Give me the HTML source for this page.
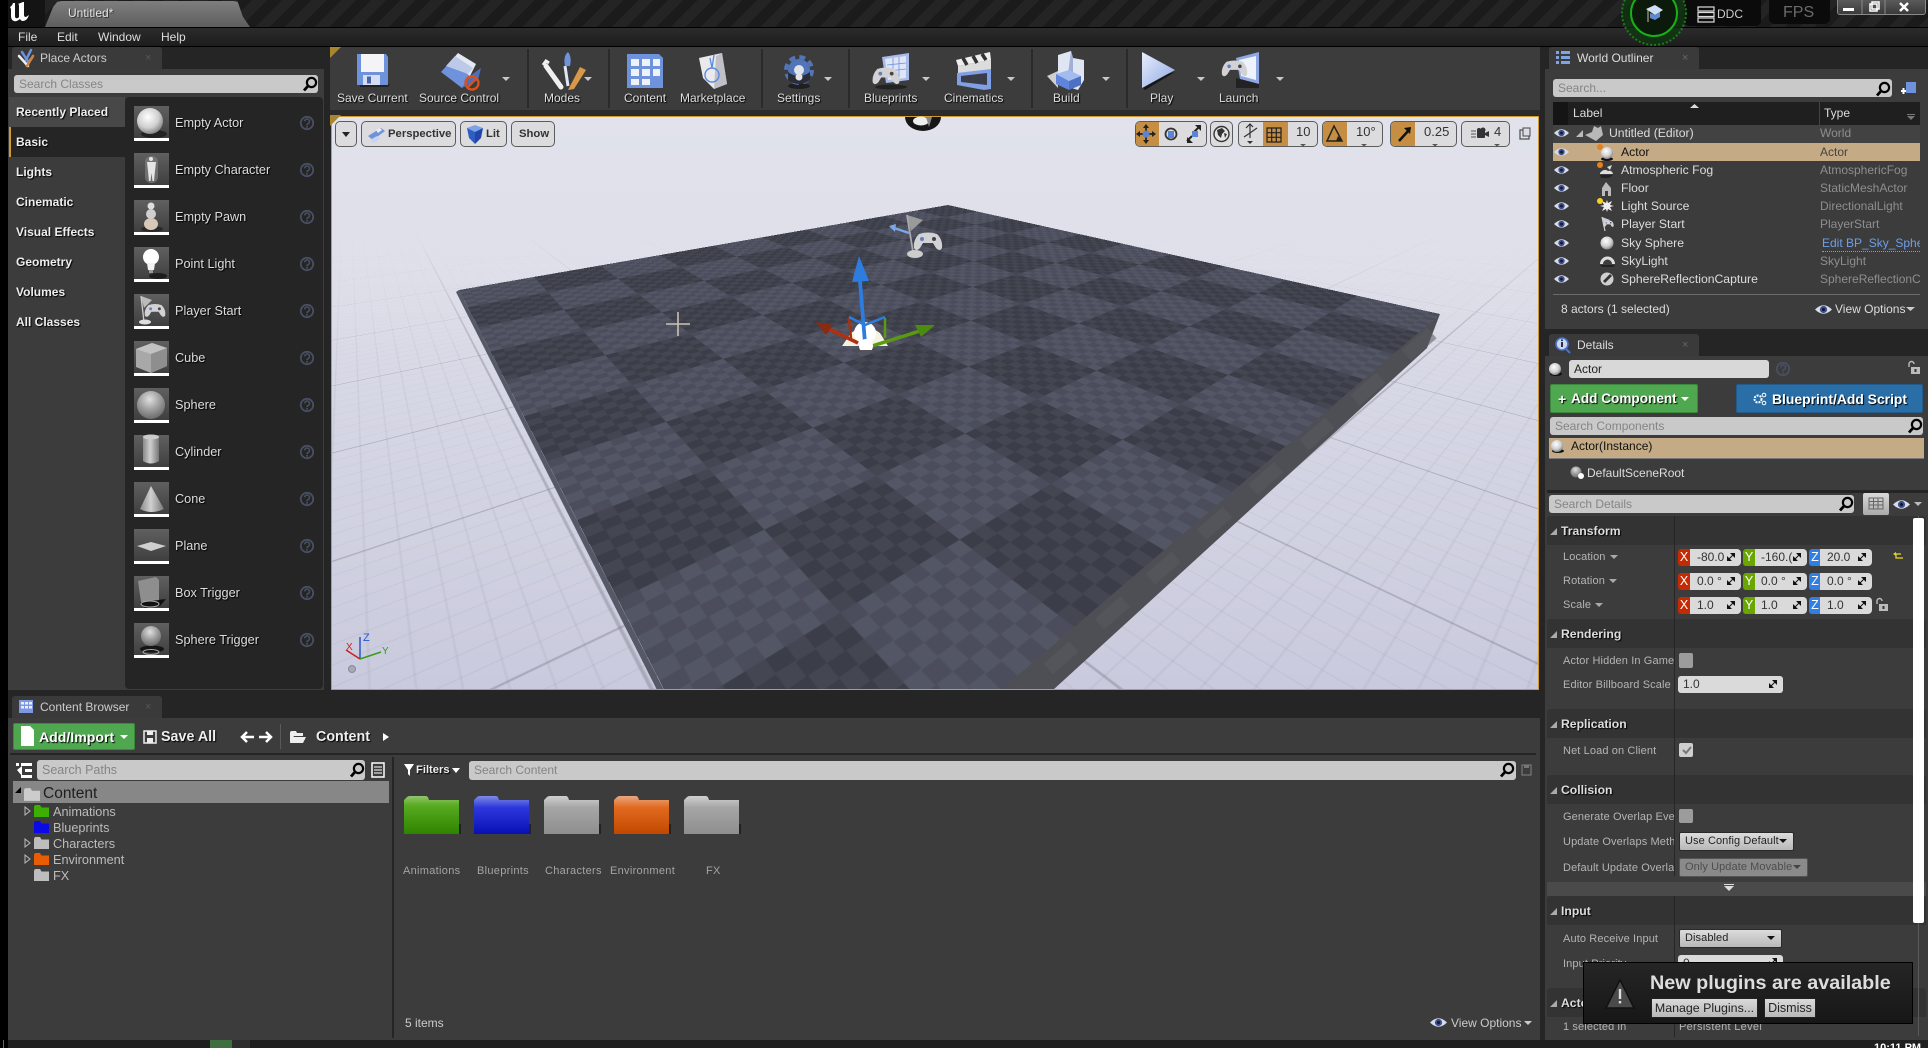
<!DOCTYPE html>
<html><head><meta charset="utf-8"><title>Untitled - Unreal Editor</title>
<style>
html,body{margin:0;padding:0;background:#252525}
body{position:relative;width:1928px;height:1048px;overflow:hidden;font-family:"Liberation Sans",sans-serif;font-size:12px;color:#ddd}
.a{position:absolute;box-sizing:border-box}
.t{position:absolute;white-space:nowrap;line-height:16px;height:16px;font-size:12px;color:#ddd}
.s{text-shadow:1px 1px 1px #000}
.b{font-weight:bold;color:#eee;text-shadow:1px 1px 1px #000}
.tab{position:absolute;box-sizing:border-box;background:#3a3a3a;border-radius:3px 3px 0 0}
.inp{position:absolute;box-sizing:border-box;background:#c9c9c9;border-radius:3px;color:#858585;line-height:18px;padding-left:5px;font-size:12px;white-space:nowrap}
.lab{position:absolute;left:1563px;width:111px;overflow:hidden;white-space:nowrap;line-height:16px;height:16px;font-size:11px;letter-spacing:.12px;color:#b4b4b4}
.sec{position:absolute;left:1547px;width:379px;height:29px;background:#333;border-radius:3px 3px 0 0}
.sect{position:absolute;left:1561px;line-height:16px;font-size:12.2px;font-weight:bold;color:#ddd;text-shadow:1px 1px 1px #000}
.f{position:absolute;box-sizing:border-box;height:17px;background:#dadada;border-radius:0 4px 4px 0;color:#333;font-size:12px;line-height:17px;white-space:nowrap;overflow:hidden}
.ax{position:absolute;width:12px;height:17px;color:#fff;font-size:12.5px;line-height:17px;text-align:center;border-radius:3px 0 0 3px}
.dd{position:absolute;box-sizing:border-box;height:19px;background:linear-gradient(#dcdcdc,#b8b8b8);border:1px solid #2a2a2a;border-radius:2px;color:#222;font-size:11px;letter-spacing:.08px;line-height:17px;padding-left:5px;white-space:nowrap}
.vb{position:absolute;box-sizing:border-box;top:121px;height:26px;background:#dcdcdf;border:1px solid #5c5c5c;border-radius:5px;color:#333;font-size:11.3px;font-weight:bold;line-height:24px;white-space:nowrap;overflow:hidden}
.or{position:absolute;left:0;top:0;bottom:0;background:#c68e42}
.vp{position:absolute;left:332px;top:117px;width:1206px;height:572px;overflow:hidden;background:linear-gradient(180deg,#e1e2eb 0,#dcdde8 30%,#d3d4e3 62%,#c9cadd 100%)}
.w{position:absolute;left:-332px;top:-117px;width:1928px;height:1048px}
.ground{position:absolute;left:0;top:28px;width:6000px;height:6000px;transform-origin:0 0;
transform:matrix3d(-.2545,-.0527,0,-.00073337,1.0855,.044,0,.00062918,0,0,1,0,459,290,0,1) translate(-3000px,-3000px);
background-image:linear-gradient(rgba(120,120,132,.36) 0 2px,transparent 2px),linear-gradient(90deg,rgba(120,120,132,.36) 0 2px,transparent 2px),linear-gradient(rgba(140,140,155,.15) 0 1.4px,transparent 1.4px),linear-gradient(90deg,rgba(140,140,155,.15) 0 1.4px,transparent 1.4px);
background-size:200px 200px,200px 200px,20px 20px,20px 20px}
.floor{position:absolute;left:0;top:0;width:1000px;height:1000px;transform-origin:0 0;
transform:matrix3d(-.2545,-.0527,0,-.00073337,1.0855,.044,0,.00062918,0,0,1,0,459,290,0,1);
background-image:repeating-conic-gradient(rgba(255,255,255,.04) 0 25%,rgba(0,0,0,.02) 0 50%),repeating-conic-gradient(#3c3e4a 0 25%,#4c4f5e 0 50%);
background-size:25px 25px,200px 200px}
</style></head><body>

<!-- title bar -->
<div class="a" style="left:0;top:0;width:1928px;height:27px;background:repeating-linear-gradient(135deg,#1b1b1b 0 10.5px,#242424 10.5px 21px)"></div>
<div class="a" style="left:0;top:0;width:8px;height:1048px;background:#000"></div>
<div class="a" style="left:8px;top:0;width:37px;height:27px;background:#141414"></div>
<div class="a" style="left:45px;top:1px;width:205px;height:26px;background:linear-gradient(#7e7e7e,#5e5e5e);clip-path:polygon(0 100%,4% 22%,6% 3%,8% 0,92% 0,94% 3%,96.5% 60%,100% 100%)"></div>
<div class="t" style="left:68px;top:5px;color:#e4e4e4;text-shadow:1px 1px 0 #333">Untitled*</div>
<!-- menu bar -->
<div class="a" style="left:8px;top:27px;width:1920px;height:20px;background:linear-gradient(#2b2b2b,#1d1d1d);border-top:1px solid #000;border-bottom:1px solid #000"></div>
<div class="t" style="left:18px;top:29px">File</div>
<div class="t" style="left:57px;top:29px">Edit</div>
<div class="t" style="left:98px;top:29px">Window</div>
<div class="t" style="left:161px;top:29px">Help</div>
<!-- DDC / FPS / window controls -->
<div class="a" style="left:1684px;top:0;width:77px;height:26px;background:#0b0b0b;border-radius:0 0 5px 5px"></div>
<div class="t" style="left:1717px;top:6px;color:#ccc;font-size:12px">DDC</div>
<div class="a" style="left:1769px;top:0;width:61px;height:24px;background:#0b0b0b;border-radius:0 0 6px 6px"></div>
<div class="t" style="left:1783px;top:5px;color:#6a6a6a;font-size:16px;line-height:16px">FPS</div>
<div class="a" style="left:1837px;top:0;width:89px;height:15px;background:linear-gradient(#5a5a5a,#3a3a3a);border:1px solid #8a8a8a;border-top:0;border-radius:0 0 3px 3px"></div>

<!-- Place actors -->
<div class="tab" style="left:12px;top:47px;width:150px;height:22px"></div>
<div class="t" style="left:40px;top:50px;color:#ccc">Place Actors</div>
<div class="t" style="left:145px;top:50px;color:#555;font-size:11px">×</div>
<div class="a" style="left:8px;top:69px;width:316px;height:621px;background:#3c3c3c"></div>
<div class="inp" style="left:14px;top:75px;width:304px;height:18px">Search Classes</div>
<div class="a" style="left:125px;top:97px;width:198px;height:592px;background:#252525;border-radius:4px"></div>
<div class="a" style="left:9px;top:97px;width:116px;height:30px;background:#484848"></div>
<div class="a" style="left:9px;top:127px;width:116px;height:30px;background:#252525;border-left:2px solid #d09a30"></div>
<div class="t b" style="left:16px;top:104px;font-size:12px">Recently Placed</div>
<div class="t b" style="left:16px;top:134px">Basic</div>
<div class="t b" style="left:16px;top:164px">Lights</div>
<div class="t b" style="left:16px;top:194px">Cinematic</div>
<div class="t b" style="left:16px;top:224px">Visual Effects</div>
<div class="t b" style="left:16px;top:254px">Geometry</div>
<div class="t b" style="left:16px;top:284px">Volumes</div>
<div class="t b" style="left:16px;top:314px">All Classes</div>
<div class="t s" style="left:175px;top:115px;font-size:12.7px">Empty Actor</div>
<div class="t s" style="left:175px;top:162px;font-size:12.7px">Empty Character</div>
<div class="t s" style="left:175px;top:209px;font-size:12.7px">Empty Pawn</div>
<div class="t s" style="left:175px;top:256px;font-size:12.7px">Point Light</div>
<div class="t s" style="left:175px;top:303px;font-size:12.7px">Player Start</div>
<div class="t s" style="left:175px;top:350px;font-size:12.7px">Cube</div>
<div class="t s" style="left:175px;top:397px;font-size:12.7px">Sphere</div>
<div class="t s" style="left:175px;top:444px;font-size:12.7px">Cylinder</div>
<div class="t s" style="left:175px;top:491px;font-size:12.7px">Cone</div>
<div class="t s" style="left:175px;top:538px;font-size:12.7px">Plane</div>
<div class="t s" style="left:175px;top:585px;font-size:12.7px">Box Trigger</div>
<div class="t s" style="left:175px;top:632px;font-size:12.7px">Sphere Trigger</div>

<!-- toolbar -->
<div class="a" style="left:330px;top:47px;width:1210px;height:63px;background:#3c3c3c"></div>
<div class="a" style="left:330px;top:110px;width:1210px;height:6px;background:#2b2b2b"></div>
<div class="t s" style="left:337px;top:90px">Save Current</div>
<div class="t s" style="left:419px;top:90px">Source Control</div>
<div class="t s" style="left:544px;top:90px">Modes</div>
<div class="t s" style="left:624px;top:90px">Content</div>
<div class="t s" style="left:680px;top:90px">Marketplace</div>
<div class="t s" style="left:777px;top:90px">Settings</div>
<div class="t s" style="left:864px;top:90px">Blueprints</div>
<div class="t s" style="left:944px;top:90px">Cinematics</div>
<div class="t s" style="left:1053px;top:90px">Build</div>
<div class="t s" style="left:1150px;top:90px">Play</div>
<div class="t s" style="left:1219px;top:90px">Launch</div>

<!-- viewport -->
<div class="a" style="left:331px;top:116px;width:1208px;height:574px;border:1px solid #d09a30"></div>
<div class="vp"><div class="w">
  <div class="ground"></div>
  <div class="a" style="left:332px;top:117px;width:1206px;height:240px;background:linear-gradient(#e1e2eb 0,#dfe0ea 45%,rgba(222,223,234,0) 100%)"></div>
  <svg class="a" style="left:0;top:0" width="1928" height="1048">
    <polygon points="1440,314 1427,348 1053,690 996,690" fill="#4e4f55"/>
    <line x1="1432" y1="333" x2="1022" y2="692" stroke="#5a5b61" stroke-width="14" stroke-dasharray="34 34" opacity=".55"/>
    <polygon points="459,290 664,690 657,690 456,292" fill="#555866"/>
  </svg>
  <div class="floor"></div>
</div></div>
<div class="vb" style="left:335px;width:22px"></div>
<div class="vb" style="left:361px;width:95px;padding-left:26px">Perspective</div>
<div class="vb" style="left:460px;width:47px;padding-left:25px">Lit</div>
<div class="vb" style="left:511px;width:44px;padding-left:7px">Show</div>
<div class="vb" style="left:1135px;width:72px"><div class="or" style="width:23px"></div></div>
<div class="vb" style="left:1210px;width:23px"></div>
<div class="vb" style="left:1238px;width:80px"><div class="or" style="left:24px;width:25px"></div><span style="position:absolute;left:57px;top:-2px;font-weight:normal;font-size:13px">10</span></div>
<div class="vb" style="left:1322px;width:61px"><div class="or" style="width:24px"></div><span style="position:absolute;left:33px;top:-2px;font-weight:normal;font-size:13px">10°</span></div>
<div class="vb" style="left:1390px;width:67px"><div class="or" style="width:24px"></div><span style="position:absolute;left:33px;top:-2px;font-weight:normal;font-size:13px">0.25</span></div>
<div class="vb" style="left:1461px;width:49px"><span style="position:absolute;left:32px;top:-2px;font-weight:normal;font-size:13px">4</span></div>

<!-- World Outliner -->
<div class="tab" style="left:1549px;top:47px;width:150px;height:22px"></div>
<div class="t" style="left:1577px;top:50px;color:#ddd">World Outliner</div>
<div class="t" style="left:1682px;top:50px;color:#666;font-size:11px">×</div>
<div class="a" style="left:1545px;top:69px;width:383px;height:260px;background:#3c3c3c"></div>
<div class="inp" style="left:1553px;top:79px;width:339px;height:18px">Search...</div>
<div class="a" style="left:1553px;top:102px;width:367px;height:23px;background:#1f1f1f"></div>
<div class="a" style="left:1553px;top:102px;width:15px;height:23px;background:#151515"></div>
<div class="a" style="left:1819px;top:102px;width:1px;height:23px;background:#444"></div>
<div class="t" style="left:1573px;top:105px">Label</div>
<div class="t" style="left:1824px;top:105px">Type</div>
<div class="a" style="left:1553px;top:125px;width:367px;height:18px;background:#424242"></div>
<div class="a" style="left:1553px;top:143px;width:367px;height:18px;background:#c4aa85"></div>
<div class="t" style="left:1609px;top:125px;font-size:12.2px">Untitled (Editor)</div>
<div class="t" style="left:1621px;top:144px;color:#111;font-size:12.2px">Actor</div>
<div class="t" style="left:1621px;top:162px;font-size:12.2px">Atmospheric Fog</div>
<div class="t" style="left:1621px;top:180px;font-size:12.2px">Floor</div>
<div class="t" style="left:1621px;top:198px;font-size:12.2px">Light Source</div>
<div class="t" style="left:1621px;top:216px;font-size:12.2px">Player Start</div>
<div class="t" style="left:1621px;top:235px;font-size:12.2px">Sky Sphere</div>
<div class="t" style="left:1621px;top:253px;font-size:12.2px">SkyLight</div>
<div class="t" style="left:1621px;top:271px;font-size:12.2px">SphereReflectionCapture</div>
<div class="t" style="left:1820px;top:125px;color:#8e8e8e">World</div>
<div class="t" style="left:1820px;top:144px;color:#444">Actor</div>
<div class="t" style="left:1820px;top:162px;color:#8e8e8e">AtmosphericFog</div>
<div class="t" style="left:1820px;top:180px;color:#8e8e8e">StaticMeshActor</div>
<div class="t" style="left:1820px;top:198px;color:#8e8e8e">DirectionalLight</div>
<div class="t" style="left:1820px;top:216px;color:#8e8e8e">PlayerStart</div>
<div class="t" style="left:1822px;top:235px;width:98px;overflow:hidden;color:#6f9ee8;border-bottom:1px dotted #6f9ee8">Edit BP_Sky_Sphere</div>
<div class="t" style="left:1820px;top:253px;color:#8e8e8e">SkyLight</div>
<div class="t" style="left:1820px;top:271px;width:100px;overflow:hidden;color:#8e8e8e">SphereReflectionCapture</div>
<div class="a" style="left:1553px;top:294px;width:367px;height:1px;background:#6a6a6a"></div>
<div class="t" style="left:1561px;top:301px;color:#ddd">8 actors (1 selected)</div>
<div class="t" style="left:1835px;top:301px;color:#ddd">View Options</div>

<!-- Details -->
<div class="tab" style="left:1549px;top:334px;width:150px;height:22px"></div>
<div class="t" style="left:1577px;top:337px;color:#ddd">Details</div>
<div class="t" style="left:1682px;top:337px;color:#666;font-size:11px">×</div>
<div class="a" style="left:1545px;top:356px;width:383px;height:684px;background:#3c3c3c"></div>
<div class="a" style="left:1569px;top:360px;width:200px;height:18px;background:#d8d8d8;border-radius:3px;color:#222;line-height:18px;padding-left:5px">Actor</div>
<div class="a" style="left:1550px;top:384px;width:148px;height:29px;background:#4fa84f;border:1px solid #3b8a3b;border-radius:2px"></div>
<div class="t b" style="left:1558px;top:391px;font-size:14px;color:#fff">+</div>
<div class="t b" style="left:1571px;top:391px;font-size:13.6px;color:#fff">Add Component</div>
<div class="a" style="left:1736px;top:384px;width:187px;height:29px;background:#2a6ea8;border:1px solid #225b8c;border-radius:2px"></div>
<div class="t b" style="left:1772px;top:391px;font-size:13.9px;color:#fff">Blueprint/Add Script</div>
<div class="inp" style="left:1550px;top:417px;width:373px;height:18px">Search Components</div>
<div class="a" style="left:1549px;top:438px;width:375px;height:20px;background:#c4aa85"></div>
<div class="t" style="left:1571px;top:438px;color:#111;font-size:12px">Actor(Instance)</div>
<div class="a" style="left:1549px;top:458px;width:375px;height:1px;background:#777"></div>
<div class="t" style="left:1587px;top:465px;color:#ddd">DefaultSceneRoot</div>
<div class="a" style="left:1547px;top:490px;width:381px;height:3px;background:#242424"></div>
<div class="inp" style="left:1549px;top:495px;width:305px;height:18px">Search Details</div>
<div class="a" style="left:1863px;top:493px;width:26px;height:22px;background:linear-gradient(#d8d8d8,#aaa);border-radius:2px"></div>

<div class="sec" style="top:516px"></div><div class="sect" style="top:523px">Transform</div>
<div class="sec" style="top:619px"></div><div class="sect" style="top:626px">Rendering</div>
<div class="sec" style="top:709px"></div><div class="sect" style="top:716px">Replication</div>
<div class="sec" style="top:775px"></div><div class="sect" style="top:782px">Collision</div>
<div class="a" style="left:1547px;top:882px;width:379px;height:14px;background:#4a4a4a"></div>
<div class="sec" style="top:896px"></div><div class="sect" style="top:903px">Input</div>
<div class="sec" style="top:988px"></div><div class="sect" style="top:995px">Actor</div>
<div class="a" style="left:1674px;top:516px;width:1px;height:360px;background:#262626"></div>
<div class="a" style="left:1674px;top:896px;width:1px;height:141px;background:#262626"></div>
<div class="a" style="left:1918px;top:516px;width:1px;height:520px;background:#5a5a5a"></div>

<div class="lab" style="top:549px">Location</div>
<div class="lab" style="top:573px">Rotation</div>
<div class="lab" style="top:597px">Scale</div>
<div class="ax" style="left:1678px;top:549px;background:#c42b04">X</div><div class="f" style="left:1690px;top:549px;width:51px;padding-left:7px">-80.0</div>
<div class="ax" style="left:1743px;top:549px;background:#6aa600">Y</div><div class="f" style="left:1755px;top:549px;width:52px;padding-left:6px">-160.(</div>
<div class="ax" style="left:1809px;top:549px;background:#2f7fe6">Z</div><div class="f" style="left:1820px;top:549px;width:52px;padding-left:7px">20.0</div>
<div class="ax" style="left:1678px;top:573px;background:#c42b04">X</div><div class="f" style="left:1690px;top:573px;width:51px;padding-left:7px">0.0 °</div>
<div class="ax" style="left:1743px;top:573px;background:#6aa600">Y</div><div class="f" style="left:1755px;top:573px;width:52px;padding-left:6px">0.0 °</div>
<div class="ax" style="left:1809px;top:573px;background:#2f7fe6">Z</div><div class="f" style="left:1820px;top:573px;width:52px;padding-left:7px">0.0 °</div>
<div class="ax" style="left:1678px;top:597px;background:#c42b04">X</div><div class="f" style="left:1690px;top:597px;width:51px;padding-left:7px">1.0</div>
<div class="ax" style="left:1743px;top:597px;background:#6aa600">Y</div><div class="f" style="left:1755px;top:597px;width:52px;padding-left:6px">1.0</div>
<div class="ax" style="left:1809px;top:597px;background:#2f7fe6">Z</div><div class="f" style="left:1820px;top:597px;width:52px;padding-left:7px">1.0</div>

<div class="lab" style="top:653px">Actor Hidden In Game</div>
<div class="a" style="left:1679px;top:653px;width:14px;height:15px;background:#9c9c9c;border-radius:2px"></div>
<div class="lab" style="top:677px">Editor Billboard Scale</div>
<div class="f" style="left:1678px;top:676px;width:105px;padding-left:5px;border-radius:3px">1.0</div>
<div class="lab" style="top:743px">Net Load on Client</div>
<div class="a" style="left:1679px;top:743px;width:14px;height:14px;background:#cfcfcf;border-radius:2px"></div>
<div class="lab" style="top:809px">Generate Overlap Events</div>
<div class="a" style="left:1679px;top:809px;width:14px;height:14px;background:#9c9c9c;border-radius:2px"></div>
<div class="lab" style="top:834px">Update Overlaps Method</div>
<div class="dd" style="left:1679px;top:832px;width:115px">Use Config Default</div>
<div class="lab" style="top:860px">Default Update Overlaps</div>
<div class="dd" style="left:1679px;top:858px;width:129px;background:#8a8a8a;color:#4e4e4e;border-color:#555">Only Update Movable</div>
<div class="lab" style="top:931px">Auto Receive Input</div>
<div class="dd" style="left:1679px;top:929px;width:103px">Disabled</div>
<div class="lab" style="top:956px">Input Priority</div>
<div class="f" style="left:1678px;top:955px;width:105px;padding-left:5px;border-radius:3px">0</div>
<div class="lab" style="top:1019px">1 selected in</div>
<div class="t" style="left:1679px;top:1019px;font-size:11px;letter-spacing:.3px;color:#b4b4b4">Persistent Level</div>
<div class="a" style="left:1913px;top:518px;width:11px;height:405px;background:#fff;border-radius:2px"></div>

<!-- Content browser -->
<div class="tab" style="left:12px;top:696px;width:150px;height:22px"></div>
<div class="t" style="left:40px;top:699px;color:#ccc">Content Browser</div>
<div class="t" style="left:145px;top:699px;color:#555;font-size:11px">×</div>
<div class="a" style="left:8px;top:718px;width:1532px;height:322px;background:#3c3c3c"></div>
<div class="a" style="left:13px;top:723px;width:122px;height:27px;background:#4fa84f;border:1px solid #3b8a3b;border-radius:2px"></div>
<div class="t b" style="left:39px;top:729px;font-size:14.1px;color:#fff">Add/Import</div>
<div class="t b" style="left:161px;top:729px;font-size:14.3px">Save All</div>
<div class="a" style="left:280px;top:724px;width:1px;height:25px;background:#5a5a5a"></div>
<div class="t b" style="left:316px;top:729px;font-size:14.3px">Content</div>
<div class="a" style="left:10px;top:753px;width:1526px;height:2px;background:#252525"></div>
<div class="a" style="left:392px;top:757px;width:2px;height:281px;background:#252525"></div>
<div class="inp" style="left:37px;top:760px;width:328px;height:20px;line-height:20px;font-size:12.5px">Search Paths</div>
<div class="a" style="left:13px;top:781px;width:376px;height:22px;background:#878787"></div>
<div class="t" style="left:43px;top:786px;font-size:15.5px;color:#1e1e1e">Content</div>
<div class="t" style="left:53px;top:804px;font-size:12.7px;color:#bcbcbc">Animations</div>
<div class="t" style="left:53px;top:820px;font-size:12.7px;color:#bcbcbc">Blueprints</div>
<div class="t" style="left:53px;top:836px;font-size:12.7px;color:#bcbcbc">Characters</div>
<div class="t" style="left:53px;top:852px;font-size:12.7px;color:#bcbcbc">Environment</div>
<div class="t" style="left:53px;top:868px;font-size:12.7px;color:#bcbcbc">FX</div>
<div class="t b" style="left:416px;top:762px;font-size:11.2px">Filters</div>
<div class="inp" style="left:469px;top:761px;width:1047px;height:19px;line-height:19px;font-size:12px">Search Content</div>
<div class="t" style="left:403px;top:863px;font-size:11px;letter-spacing:.3px;color:#a4a4a4">Animations</div>
<div class="t" style="left:477px;top:863px;font-size:11px;letter-spacing:.3px;color:#a4a4a4">Blueprints</div>
<div class="t" style="left:545px;top:863px;font-size:11px;letter-spacing:.3px;color:#a4a4a4">Characters</div>
<div class="t" style="left:610px;top:863px;font-size:11px;letter-spacing:.3px;color:#a4a4a4">Environment</div>
<div class="t" style="left:706px;top:863px;font-size:11px;letter-spacing:.3px;color:#a4a4a4">FX</div>
<div class="t" style="left:405px;top:1015px;color:#ccc">5 items</div>
<div class="t" style="left:1451px;top:1015px;color:#ccc">View Options</div>

<!-- status strip -->
<div class="a" style="left:8px;top:1040px;width:1920px;height:8px;background:#1f1f1f"></div>
<div class="a" style="left:210px;top:1040px;width:22px;height:8px;background:#3f6f3f"></div>
<div class="a" style="left:232px;top:1040px;width:18px;height:8px;background:#2d2d2d"></div>
<div class="a" style="left:3px;top:1040px;width:1px;height:8px;background:#666"></div>
<div class="t" style="left:1874px;top:1043px;color:#fff;font-weight:bold;font-size:11px;height:5px;overflow:hidden;line-height:11px">10:11 PM</div>

<!-- icon overlay -->
<svg class="a" style="left:0;top:0;pointer-events:none" width="1928" height="1048">
<defs>
 <radialGradient id="sph" cx=".42" cy=".35" r=".75"><stop offset="0" stop-color="#fff"/><stop offset=".55" stop-color="#cfcfcf"/><stop offset="1" stop-color="#6a6a6a"/></radialGradient>
 <radialGradient id="sph2" cx=".45" cy=".3" r=".8"><stop offset="0" stop-color="#e0e0e0"/><stop offset=".5" stop-color="#9a9a9a"/><stop offset="1" stop-color="#5c5c5c"/></radialGradient>
 <linearGradient id="thb" x1="0" y1="0" x2="0" y2="1"><stop offset="0" stop-color="#606060"/><stop offset="1" stop-color="#3f3f3f"/></linearGradient>
 <linearGradient id="cyl" x1="0" x2="1"><stop offset="0" stop-color="#8a8a8a"/><stop offset=".45" stop-color="#d0d0d0"/><stop offset="1" stop-color="#777"/></linearGradient>
 <linearGradient id="play" x1="0" y1="0" x2="1" y2="1"><stop offset="0" stop-color="#e8eefc"/><stop offset="1" stop-color="#8ea8e4"/></linearGradient>
 <linearGradient id="fg" x1="0" y1="0" x2="0" y2="1"><stop offset="0" stop-color="#92c46e"/><stop offset=".25" stop-color="#58ab20"/><stop offset="1" stop-color="#2f8400"/></linearGradient>
 <linearGradient id="fb" x1="0" y1="0" x2="0" y2="1"><stop offset="0" stop-color="#7f8be6"/><stop offset=".3" stop-color="#2d38dc"/><stop offset="1" stop-color="#0810b4"/></linearGradient>
 <linearGradient id="fw" x1="0" y1="0" x2="0" y2="1"><stop offset="0" stop-color="#d0d0d0"/><stop offset=".3" stop-color="#a6a6a6"/><stop offset="1" stop-color="#8e8e8e"/></linearGradient>
 <linearGradient id="fo" x1="0" y1="0" x2="0" y2="1"><stop offset="0" stop-color="#e8a880"/><stop offset=".3" stop-color="#e26a20"/><stop offset="1" stop-color="#c24800"/></linearGradient>
 <symbol id="eye" viewBox="0 0 16 10" overflow="visible"><path d="M0 5Q8 -3 16 5Q8 13 0 5Z" fill="#d8dce8"/><circle cx="8" cy="5" r="3.4" fill="#3d4f8c"/><circle cx="8" cy="5" r="1.4" fill="#101628"/></symbol>
 <symbol id="help" viewBox="-8 -8 16 16" overflow="visible"><circle r="6.2" fill="none" stroke="#474f61" stroke-width="1.8"/><path d="M-2.3 -1.6a2.4 2.4 0 1 1 3.4 2.2c-.8.4-1.1.8-1.1 1.6" fill="none" stroke="#474f61" stroke-width="1.6"/><rect x="-.9" y="3" width="1.8" height="1.6" fill="#474f61"/></symbol>
 <symbol id="mag" viewBox="0 0 16 16" overflow="visible"><circle cx="9.5" cy="6.5" r="4.6" fill="none" stroke="#000" stroke-width="2.2"/><line x1="6" y1="10" x2="2" y2="14.5" stroke="#000" stroke-width="2.8"/></symbol>
 <symbol id="farr" viewBox="0 0 8 8" overflow="visible"><polygon points="8,0 3,0 8,5" fill="#111"/><polygon points="0,8 5,8 0,3" fill="#111"/><line x1="2" y1="6" x2="6" y2="2" stroke="#111"/></symbol>
 <symbol id="fold" viewBox="0 0 15 12" overflow="visible"><path d="M0 2.5Q0 0 2 0H6L7.5 2.5H15V12H0Z"/></symbol>
 <symbol id="lock" viewBox="0 0 13 13" overflow="visible"><path d="M1 6V3a2.5 2.5 0 0 1 5 0" fill="none" stroke="#bbb" stroke-width="1.4"/><rect x="3" y="6" width="9" height="7" fill="#bbb"/><rect x="6.5" y="8" width="2" height="3" fill="#333"/></symbol>
 <symbol id="ctrl" viewBox="0 0 30 20" overflow="visible"><path d="M6 2Q15 -1 24 2Q30 8 29 16Q27 20 23 16L20 11H10L7 16Q3 20 1 16Q0 8 6 2Z" fill="#d2d2d4"/><circle cx="9" cy="7" r="2" fill="#5e7fc2"/><circle cx="21" cy="7" r="2" fill="#444"/></symbol>
</defs>

<!-- UE logo -->
<path d="M10 7Q12 6 13 3H15V16Q15 19 18 18L19 17V6Q19 4 18 4L23 2H24V15Q24 17 26 17L29 15Q27 21 23 21Q21 21 20 19Q16 22 14 21Q11 20 11 16V9Z" fill="#fff"/>

<!-- tab icons -->
<g stroke-linecap="round" fill="none">
 <path d="M22 52L27 60M31 50L26 60M32 58L26 64" stroke="#6c93dc" stroke-width="2.5"/><path d="M19 56L28 66" stroke="#eee" stroke-width="2.5"/><path d="M33 56L27 66" stroke="#d0843c" stroke-width="2.5"/>
</g>
<g fill="#7fa4e6"><rect x="1556" y="51" width="3" height="3"/><rect x="1561" y="51" width="9" height="3"/><rect x="1556" y="56" width="3" height="3"/><rect x="1561" y="56" width="9" height="3"/><rect x="1556" y="61" width="3" height="3"/><rect x="1561" y="61" width="9" height="3"/></g>
<g><circle cx="1562" cy="344" r="6" fill="#ccd6f0" stroke="#4a72c8" stroke-width="1.6"/><line x1="1566" y1="349" x2="1570" y2="353" stroke="#4a72c8" stroke-width="2"/><rect x="1561" y="342" width="2" height="5" fill="#234"/><rect x="1561" y="339.500" width="2" height="1.500" fill="#234"/></g>
<g><rect x="19" y="700" width="14" height="13" fill="#7d97e0"/><g fill="#e8eefc"><rect x="21" y="702" width="3" height="2.500"/><rect x="25" y="702" width="3" height="2.500"/><rect x="29" y="702" width="3" height="2.500"/><rect x="21" y="706" width="3" height="2.500"/><rect x="25" y="706" width="3" height="2.500"/><rect x="29" y="706" width="3" height="2.500"/></g></g>

<!-- place-actors search -->
<use href="#mag" x="302" y="76" width="16" height="16"/>

<!-- thumbnails -->
<g id="thumbs">
 <g fill="url(#thb)"><rect x="134" y="106" width="35" height="32"/><rect x="134" y="153" width="35" height="32"/><rect x="134" y="200" width="35" height="32"/><rect x="134" y="247" width="35" height="32"/><rect x="134" y="294" width="35" height="32"/><rect x="134" y="341" width="35" height="32"/><rect x="134" y="388" width="35" height="32"/><rect x="134" y="435" width="35" height="32"/><rect x="134" y="482" width="35" height="32"/><rect x="134" y="529" width="35" height="32"/><rect x="134" y="576" width="35" height="32"/><rect x="134" y="623" width="35" height="32"/></g>
 <g fill="#fff"><rect x="134" y="138" width="35" height="3"/><rect x="134" y="185" width="35" height="3"/><rect x="134" y="232" width="35" height="3"/><rect x="134" y="279" width="35" height="3"/><rect x="134" y="326" width="35" height="3"/><rect x="134" y="373" width="35" height="3"/><rect x="134" y="420" width="35" height="3"/><rect x="134" y="467" width="35" height="3"/><rect x="134" y="514" width="35" height="3"/><rect x="134" y="561" width="35" height="3"/><rect x="134" y="608" width="35" height="3"/><rect x="134" y="655" width="35" height="3"/></g>
 <ellipse cx="154" cy="134" rx="13" ry="4" fill="#222"/><circle cx="150" cy="121" r="13" fill="url(#sph)"/>
 <rect x="145" y="156" width="13" height="27" rx="6" fill="#888" opacity=".6"/><path d="M151 157a2 2 0 0 1 0 4 2 2 0 0 1 0-4M147 162h9l-1 9-1 10h-1.500l-1-8-1 8H149l-1-10z" fill="#e6e6e6"/>
 <ellipse cx="152" cy="229" rx="11" ry="3" fill="#2a2a2a"/><circle cx="151" cy="206" r="3.500" fill="#ddd"/><circle cx="151" cy="214" r="5" fill="#cfcfcf"/><ellipse cx="151" cy="224" rx="7" ry="6" fill="#d8c8b8"/>
 <ellipse cx="158" cy="276" rx="9" ry="3" fill="#1d1d1d"/><circle cx="151" cy="257" r="8" fill="#fff"/><path d="M147 263h8l-1 7h-6z" fill="#f2f2f2"/><rect x="149" y="270" width="4" height="3" fill="#999"/>
 <polygon points="141,296 152,300 144,308" fill="#bbb"/><line x1="141" y1="296" x2="144" y2="322" stroke="#ccc" stroke-width="1.300"/><use href="#ctrl" x="144" y="303" width="22" height="16"/><ellipse cx="145" cy="322" rx="6" ry="2.500" fill="#ddd"/>
 <polygon points="136,349 152,343 167,348 167,366 151,373 136,367" fill="#a8a8a8"/><polygon points="136,349 152,343 167,348 151,354" fill="#c2c2c2"/><polygon points="151,354 167,348 167,366 151,373" fill="#8e8e8e"/>
 <circle cx="151" cy="405" r="14" fill="url(#sph2)"/>
 <path d="M143 437v24q8 5 16 0v-24z" fill="url(#cyl)"/><ellipse cx="151" cy="437" rx="8" ry="2.500" fill="#ccc"/>
 <path d="M151 486L164 509Q151 515 140 509Z" fill="url(#cyl)"/>
 <polygon points="137,546 151,542 166,546 151,551" fill="#cfcfcf"/>
 <polygon points="140,602 166,599 160,606 145,608" fill="#111"/><polygon points="138,581 156,577 159,580 159,600 141,602" fill="#8e8e8e"/><ellipse cx="150" cy="604" rx="9" ry="3" fill="none" stroke="#aaa"/>
 <ellipse cx="152" cy="649" rx="12" ry="3.500" fill="#151515"/><circle cx="151" cy="636" r="10" fill="url(#sph2)"/><ellipse cx="151" cy="652" rx="8" ry="2.500" fill="none" stroke="#aaa"/>
</g>
<g>
 <use href="#help" x="299" y="115" width="16" height="16"/><use href="#help" x="299" y="162" width="16" height="16"/><use href="#help" x="299" y="209" width="16" height="16"/><use href="#help" x="299" y="256" width="16" height="16"/><use href="#help" x="299" y="303" width="16" height="16"/><use href="#help" x="299" y="350" width="16" height="16"/><use href="#help" x="299" y="397" width="16" height="16"/><use href="#help" x="299" y="444" width="16" height="16"/><use href="#help" x="299" y="491" width="16" height="16"/><use href="#help" x="299" y="538" width="16" height="16"/><use href="#help" x="299" y="585" width="16" height="16"/><use href="#help" x="299" y="632" width="16" height="16"/>
</g>

<!-- toolbar & viewport corner marks -->
<polygon points="330,47 341,47 330,58" fill="#a8852e"/><polygon points="330,115 341,115 330,126" fill="#a8852e"/>
<g fill="#2a2a2a"><rect x="527" y="49" width="2" height="59"/><rect x="608" y="49" width="2" height="59"/><rect x="761" y="49" width="2" height="59"/><rect x="848" y="49" width="2" height="59"/><rect x="1031" y="49" width="2" height="59"/><rect x="1126" y="49" width="2" height="59"/></g>
<g fill="#c8c8c8"><polygon points="502,77 510,77 506,81"/><polygon points="584,77 592,77 588,81"/><polygon points="824,77 832,77 828,81"/><polygon points="922,77 930,77 926,81"/><polygon points="1007,77 1015,77 1011,81"/><polygon points="1102,77 1110,77 1106,81"/><polygon points="1197,77 1205,77 1201,81"/><polygon points="1276,77 1284,77 1280,81"/></g>

<!-- Save -->
<path d="M360 84h30l-2 3h-28z" fill="#222"/><path d="M357 54h29l2 3v28h-31z" fill="#6f92dc"/><rect x="361" y="54" width="23" height="18" fill="#f4f4f6"/><rect x="363" y="75" width="17" height="10" fill="#d6def2"/><rect x="367" y="76.500" width="4" height="7" fill="#4a66a8"/>
<!-- Source control -->
<polygon points="441,72 450,62 470,76 462,88" fill="#6f92dc"/><polygon points="462,88 470,76 481,68 478,80" fill="#4e70ba"/><polygon points="450,62 458,53 476,64 470,76" fill="#e6e9f2"/><polygon points="446,66 455,56 473,68 468,74" fill="#bcc9e8"/>
<circle cx="472" cy="83" r="6.500" fill="none" stroke="#d8501c" stroke-width="2.400"/><line x1="467.500" y1="87.500" x2="476.500" y2="78.500" stroke="#d8501c" stroke-width="2.400"/>
<!-- Modes -->
<path d="M546 66L561 87" stroke="#f0f0f0" stroke-width="5" stroke-linecap="round"/><path d="M543 65l3-4 3 2" fill="none" stroke="#f0f0f0" stroke-width="3"/><path d="M568 86L565 66" stroke="#dfe6f8" stroke-width="3"/><path d="M565 66Q563 56 568 52Q572 57 570 66z" fill="#6f92dc"/><path d="M580 67L586 70 574 89 568 90Z" fill="#d89848"/>
<!-- Content -->
<path d="M627 54h32l4 4v30h-36z" fill="#6f92dc"/><g fill="#eef2fb"><rect x="631" y="59" width="8" height="7"/><rect x="642" y="59" width="8" height="7"/><rect x="653" y="59" width="7" height="7"/><rect x="631" y="69" width="8" height="7"/><rect x="642" y="69" width="8" height="7"/><rect x="653" y="69" width="7" height="7"/><rect x="631" y="79" width="8" height="6"/><rect x="642" y="79" width="8" height="6"/></g>
<!-- Marketplace -->
<polygon points="699,58 722,53 727,84 714,89 703,78" fill="#e9e9ee"/><polygon points="722,53 727,84 714,89 716,56" fill="#bfc1c7"/><circle cx="712" cy="75" r="7" fill="none" stroke="#5c8ae0" stroke-width="1.400"/><path d="M710 58l2 10 2-13" fill="none" stroke="#5c8ae0" stroke-width="1.300"/>
<!-- Settings -->
<ellipse cx="799" cy="86" rx="11" ry="3" fill="#1f1f1f"/><circle cx="799" cy="70" r="11" fill="#5274b8"/><circle cx="799" cy="70" r="13" fill="none" stroke="#5274b8" stroke-width="4" stroke-dasharray="6 4.200"/><circle cx="799" cy="70" r="5" fill="#dfe3ea"/><path d="M788 72q11 8 22 0v8q-11 8-22 0z" fill="#2a2d38"/><circle cx="799" cy="77" r="3.500" fill="#e4e4e4"/>
<!-- Blueprints -->
<polygon points="882,57 909,53 909,80 886,83" fill="#a9bbe8"/><polygon points="885,59 906,56 906,78 888,80" fill="#dfe6f8"/><path d="M893 58v20M899 57v20M887 65l19-2M888 71l18-2" stroke="#6f92dc" stroke-width=".8" fill="none"/><ellipse cx="891" cy="87" rx="16" ry="2.500" fill="#222"/><use href="#ctrl" x="871" y="67" width="30" height="19"/>
<!-- Cinematics -->
<polygon points="958,66 991,60 991,70 958,74" fill="#dcdcdc"/><polygon points="956,60 990,52 991,60 958,66" fill="#eee"/><path d="M963 58l4 7M973 56l4 7M982 54l4 6" stroke="#333" stroke-width="3.500"/><polygon points="957,73 991,69 991,89 984,90 957,85" fill="#7fa0e4"/><polygon points="961,76 987,73 987,85 961,82" fill="#3a3d48"/>
<!-- Build -->
<polygon points="1058,55 1071,51 1073,58 1084,60 1084,80 1078,90 1058,84" fill="#dfe6f2"/><polygon points="1071,51 1073,58 1073,72 1068,74" fill="#9fb0d6"/><polygon points="1047,76 1058,71 1058,88" fill="#cfcfcf"/><polygon points="1056,74 1069,70 1081,76 1069,81" fill="#a3bcf0"/><polygon points="1056,74 1069,81 1069,90 1056,84" fill="#5f85da"/><polygon points="1069,81 1081,76 1081,85 1069,90" fill="#4e70c4"/>
<!-- Play -->
<polygon points="1143,88 1163,75 1175,72 1145,90" fill="#161616"/><polygon points="1142,52 1175,70 1142,88" fill="url(#play)"/>
<!-- Launch -->
<polygon points="1236,58 1259,52 1259,84 1240,79" fill="#8ea8e4"/><polygon points="1239,60 1256,56 1256,80 1241,76" fill="#eef2fb"/><polygon points="1236,78 1259,84 1259,88 1236,88" fill="#222"/><use href="#ctrl" x="1220" y="60" width="29" height="18"/>

<!-- viewport toolbar icons -->
<polygon points="342,132 350,132 346,137" fill="#222"/>
<g transform="translate(368,128)"><polygon points="0,8 13,0 17,3 5,12" fill="#6f92dc"/><polygon points="2,12 9,8 12,11 5,15" fill="#c6d4f2"/><polygon points="8,2 12,0 14,2 10,5" fill="#e6ecfa"/></g>
<g transform="translate(467,125)"><polygon points="0,3 8,0 16,3 8,7" fill="#7ea2ea"/><polygon points="0,3 8,7 8,19 2,13" fill="#2f5dc0"/><polygon points="16,3 8,7 8,19 14,13" fill="#1f46a8"/></g>
<g stroke="#222" stroke-width="1.700" fill="none"><path d="M1146 127v14M1139 134h14"/></g><circle cx="1146" cy="134" r="3.500" fill="#5b83d6"/><g fill="#222"><polygon points="1146,124 1143,128 1149,128"/><polygon points="1146,144 1143,140 1149,140"/><polygon points="1136,134 1140,131 1140,137"/><polygon points="1156,134 1152,131 1152,137"/></g>
<circle cx="1171" cy="134" r="5.500" fill="none" stroke="#333" stroke-width="1.800"/><rect x="1168" y="131" width="6" height="7" fill="#5b83d6"/>
<path d="M1187 141l5-5M1194 132l6-6" stroke="#222" stroke-width="2"/><rect x="1192" y="131" width="6" height="6" fill="#5b83d6"/><polygon points="1201,125 1195,125 1201,131" fill="#222"/><polygon points="1187,143 1193,143 1187,137" fill="#222"/>
<circle cx="1221.500" cy="134" r="7.500" fill="#e4e4e4" stroke="#333" stroke-width="1.400"/><path d="M1217 130l5-2 3 3-3 3-1 4-3-3zM1224 133l3 1-2 4z" fill="#333"/>
<path d="M1250 124v14M1250 133l-6 4M1250 133l7-5M1246 128l4-4 3 3" fill="none" stroke="#333" stroke-width="1.200"/><polygon points="1247,141 1253,141 1250,144" fill="#333"/>
<path d="M1267 128h14v14h-14zM1267 132.700h14M1267 137.300h14M1271.700 128v14M1276.300 128v14" fill="none" stroke="#222" stroke-width="1.200"/>
<path d="M1334 126l-7 15h15z" fill="none" stroke="#222" stroke-width="1.500"/><polygon points="1338,136 1342,141 1336,141" fill="#222"/>
<path d="M1399 141l10-11" stroke="#111" stroke-width="2.500"/><polygon points="1411,127 1404,128 1410,134" fill="#111"/>
<g transform="translate(1471,127)"><rect x="6" y="3" width="8" height="8" rx="1" fill="#333"/><circle cx="12" cy="3" r="2.500" fill="#333"/><circle cx="8" cy="3" r="2" fill="#333"/><path d="M0 4h5M0 7h5M0 10h5" stroke="#555" stroke-width="1"/><polygon points="14,6 18,4 18,10 14,8" fill="#333"/></g>
<g fill="#333"><polygon points="1361,144 1367,144 1364,146.500" opacity=".8"/><polygon points="1432,144 1438,144 1435,146.500" opacity=".8"/><polygon points="1494,144 1500,144 1497,146.500" opacity=".8"/><polygon points="1300,144 1306,144 1303,146.500" opacity=".8"/></g>
<rect x="1520" y="130" width="9" height="9" fill="none" stroke="#555" stroke-width="1.300"/><rect x="1523" y="128" width="7" height="8" fill="#dcdce6" stroke="#555" stroke-width="1.100"/>

<!-- viewport objects -->
<path d="M905 117A18 14 0 0 0 941 117Z" fill="#161616"/><ellipse cx="921" cy="121" rx="8" ry="4.500" fill="#eee"/><path d="M926 117h6l-3 10z" fill="#888"/>
<line x1="678" y1="312" x2="678" y2="336" stroke="#cbc3b6" stroke-width="1.600"/><line x1="666" y1="324" x2="690" y2="324" stroke="#cbc3b6" stroke-width="1.600"/>
<!-- player start -->
<path d="M891 227L909 233" stroke="#7ba6e8" stroke-width="2.500"/><polygon points="889,226 896,224 895,232" fill="#7ba6e8"/>
<use href="#ctrl" x="913" y="231" width="30" height="22"/>
<polygon points="907,215 923,220 911,231" fill="#9a9a9a"/><line x1="907" y1="215" x2="913" y2="252" stroke="#aaa" stroke-width="1.800"/><ellipse cx="915" cy="254" rx="8" ry="4" fill="#ccc"/>
<!-- gizmo -->
<path d="M842 346L851 333Q865 322 880 333L888 346Z" fill="#f6f2e2"/><circle cx="865" cy="333" r="11" fill="#fff"/>
<path d="M849 318L851 338" stroke="#a83010" stroke-width="2.500" fill="none"/><path d="M885 318L885 338" stroke="#5a9a10" stroke-width="2.500" fill="none"/>
<path d="M849 317L865 325L885 317" stroke="#2d7ce0" stroke-width="2.500" fill="none"/>
<path d="M858 343L825 327" stroke="#b03010" stroke-width="3.500"/><polygon points="816,322 833,325 826,335" fill="#8a2a10"/>
<path d="M872 346L920 331" stroke="#5a9a10" stroke-width="3.500"/><polygon points="935,325 915,325 921,337" fill="#4c8a10"/>
<path d="M865 343L859.500 275" stroke="#2d7ce0" stroke-width="3.800"/><polygon points="859,256 869,281 852,282" fill="#2d7ce0"/>
<circle cx="866" cy="346" r="7" fill="#fff"/><path d="M860 350l12 0-3 4h-6z" fill="#555"/>
<!-- axis -->
<g fill="none" stroke-width="1.500"><path d="M360 659V637" stroke="#2a55d0"/><path d="M360 659L346 650" stroke="#c82020"/><path d="M360 659L381 652" stroke="#3a9a20"/></g>
<circle cx="352" cy="669" r="3.500" fill="#a8a8b4" stroke="#8a8a98"/>
<text x="363" y="641" font-size="11" fill="#2a55d0" font-family="Liberation Sans,sans-serif">Z</text>
<text x="346" y="650" font-size="10" fill="#c82020" font-family="Liberation Sans,sans-serif">X</text>
<text x="382" y="654" font-size="10" fill="#3a9a20" font-family="Liberation Sans,sans-serif">Y</text>

<!-- green beacon -->
<circle cx="1654" cy="13" r="32" fill="#0b3a0b" opacity=".65"/><circle cx="1654" cy="13" r="32" fill="none" stroke="#1f7a1f" stroke-width="2" stroke-dasharray="2 2"/><circle cx="1654" cy="13" r="23" fill="#0c1a0c" stroke="#18b018" stroke-width="2"/>
<polygon points="1646,9 1655,5 1663,10 1655,15" fill="#cfe0f5"/><polygon points="1650,13 1655,15 1660,12 1660,17 1655,20 1650,18" fill="#5f8ad0"/><line x1="1648" y1="10" x2="1648" y2="22" stroke="#d8c090"/>
<rect x="1698" y="7" width="16" height="4" fill="none" stroke="#ddd" stroke-width="1.200"/><rect x="1698" y="12.500" width="16" height="4" fill="none" stroke="#ddd" stroke-width="1.200"/><rect x="1698" y="18" width="16" height="4" fill="none" stroke="#ddd" stroke-width="1.200"/>
<!-- window controls -->
<g fill="none" stroke="#000"><line x1="1862" y1="0" x2="1862" y2="15" stroke="#8a8a8a"/><line x1="1885" y1="0" x2="1885" y2="15" stroke="#8a8a8a"/></g>
<rect x="1843" y="8" width="11" height="3" fill="#fff"/>
<rect x="1870" y="4" width="7" height="7" fill="none" stroke="#fff" stroke-width="1.500"/><rect x="1872" y="2" width="7" height="7" fill="none" stroke="#fff" stroke-width="1.500"/>
<path d="M1900 3l8 8M1908 3l-8 8" stroke="#fff" stroke-width="2.500"/>

<!-- outliner -->
<use href="#mag" x="1875" y="81" width="16" height="16"/>
<rect x="1906" y="82" width="10" height="11" fill="#6f92dc"/><path d="M1905 89h-5M1902.500 86v6" stroke="#fff" stroke-width="2" transform="translate(1,2)"/>
<polygon points="1690,108 1699,108 1694.500,104" fill="#ddd"/><polygon points="1907,116 1915,116 1911,120" fill="#777"/><rect x="1907" y="114" width="8" height="1" fill="#777"/>
<g><use href="#eye" x="1554" y="128" width="15" height="10"/><use href="#eye" x="1554" y="147" width="15" height="10"/><use href="#eye" x="1554" y="165" width="15" height="10"/><use href="#eye" x="1554" y="183" width="15" height="10"/><use href="#eye" x="1554" y="201" width="15" height="10"/><use href="#eye" x="1554" y="219" width="15" height="10"/><use href="#eye" x="1554" y="238" width="15" height="10"/><use href="#eye" x="1554" y="256" width="15" height="10"/><use href="#eye" x="1554" y="274" width="15" height="10"/></g>
<polygon points="1576,137 1583,137 1583,130" fill="#bbb"/>
<polygon points="1585,135 1592,132 1594,126 1598,128 1601,126 1603,135 1596,141" fill="#b8b8b8"/>
<ellipse cx="1607" cy="159" rx="6" ry="2" fill="#111"/><circle cx="1607" cy="153" r="6" fill="url(#sph)"/><circle cx="1600" cy="147" r="3" fill="#e8801c"/>
<path d="M1600 173q4-5 8-2q4-1 5 3h-13z" fill="#ddd"/><path d="M1600 175h13l-4 3h-8z" fill="#222"/><polygon points="1607,167 1612,165 1610,170" fill="#ddd"/><circle cx="1600" cy="165" r="3" fill="#e8801c"/>
<path d="M1602 188l4-6 5 6v8h-3v-5h-3v5h-3z" fill="#bbb"/>
<path d="M1607 200l1 3 4-2-2 4 4 1-4 1 2 4-4-2-1 3-1-3-4 2 2-4-4-1 4-1-2-4 4 2z" fill="#eee"/><circle cx="1600" cy="201" r="3" fill="#f2d21c"/>
<polygon points="1602,217 1610,220 1604,224" fill="#ccc"/><line x1="1602" y1="217" x2="1605" y2="231" stroke="#ccc" stroke-width="1.200"/><use href="#ctrl" x="1603" y="220" width="11" height="8" />
<circle cx="1607" cy="243" r="6.500" fill="url(#sph)"/>
<path d="M1600 264a7.500 7.500 0 0 1 15 0h-3a4.500 4.500 0 0 0-9 0z" fill="#ddd"/><path d="M1600 265h15l-2 2h-11z" fill="#222"/>
<circle cx="1607" cy="279" r="6.500" fill="#cfcfcf"/><path d="M1603 281l7-7 2 2-7 7z" fill="#333"/>
<use href="#eye" x="1815" y="304" width="17" height="11"/>
<polygon points="1906,307 1915,307 1910.500,311" fill="#ccc"/>

<!-- details -->
<ellipse cx="1556" cy="374" rx="6" ry="2" fill="#111"/><circle cx="1555" cy="369" r="6" fill="url(#sph)"/>
<use href="#help" x="1775" y="361" width="16" height="16"/><use href="#lock" x="1908" y="361" width="13" height="13"/>
<polygon points="1681,397 1689,397 1685,401" fill="#fff"/>
<circle cx="1758" cy="399" r="3.500" fill="none" stroke="#fff" stroke-width="2" stroke-dasharray="2 1"/><circle cx="1764" cy="395" r="1.800" fill="none" stroke="#fff"/><circle cx="1764" cy="403" r="1.800" fill="none" stroke="#fff"/>
<use href="#mag" x="1907" y="418" width="16" height="16"/>
<ellipse cx="1558" cy="451" rx="6" ry="2" fill="#111"/><circle cx="1557" cy="446" r="6" fill="url(#sph)"/>
<circle cx="1576" cy="472" r="5.500" fill="url(#sph2)"/><circle cx="1581" cy="476" r="3" fill="#fff"/>
<use href="#mag" x="1838" y="496" width="16" height="16"/>
<path d="M1869 498h14v11h-14zM1869 501.500h14M1869 505h14M1873.500 498v11M1878 498v11" fill="none" stroke="#666"/>
<use href="#eye" x="1893" y="499" width="17" height="11"/><polygon points="1914,502 1922,502 1918,506" fill="#bbb"/>
<g fill="#aaa"><polygon points="1550,535 1557,535 1557,528"/><polygon points="1550,638 1557,638 1557,631"/><polygon points="1550,728 1557,728 1557,721"/><polygon points="1550,794 1557,794 1557,787"/><polygon points="1550,915 1557,915 1557,908"/><polygon points="1550,1007 1557,1007 1557,1000"/></g>
<g fill="#aaa"><polygon points="1610,555 1618,555 1614,559"/><polygon points="1609,579 1617,579 1613,583"/><polygon points="1595,603 1603,603 1599,607"/></g>
<g><use href="#farr" x="1727" y="553" width="8" height="8"/><use href="#farr" x="1793" y="553" width="8" height="8"/><use href="#farr" x="1858" y="553" width="8" height="8"/><use href="#farr" x="1727" y="577" width="8" height="8"/><use href="#farr" x="1793" y="577" width="8" height="8"/><use href="#farr" x="1858" y="577" width="8" height="8"/><use href="#farr" x="1727" y="601" width="8" height="8"/><use href="#farr" x="1793" y="601" width="8" height="8"/><use href="#farr" x="1858" y="601" width="8" height="8"/><use href="#farr" x="1769" y="680" width="8" height="8"/><use href="#farr" x="1769" y="958" width="8" height="8"/></g>
<path d="M1901 554h-5v4h7" fill="none" stroke="#e8d820" stroke-width="1.300"/><polygon points="1896,552 1896,556 1893,554" fill="#e8d820"/>
<use href="#lock" x="1876" y="598" width="13" height="13"/>
<path d="M1683 750l3 3 5-6" fill="none" stroke="#777" stroke-width="2"/>
<polygon points="1779,839 1787,839 1783,843" fill="#111"/><polygon points="1793,865 1801,865 1797,869" fill="#444"/><polygon points="1767,936 1775,936 1771,940" fill="#111"/>
<polygon points="1724,886 1734,886 1729,891" fill="#ddd"/><rect x="1724" y="884" width="10" height="1" fill="#ddd"/>

<!-- content browser -->
<path d="M21 726h9l4 4v16H21z" fill="#fff"/><polygon points="120,735 128,735 124,739" fill="#fff"/>
<rect x="144" y="731" width="12" height="12" fill="none" stroke="#eee" stroke-width="1.500"/><rect x="147" y="731" width="6" height="4" fill="#eee"/><rect x="147" y="738" width="6" height="5" fill="#eee"/>
<path d="M254 737h-11M247 732l-5 5 5 5" fill="none" stroke="#fff" stroke-width="2.500"/>
<path d="M259 737h11M266 732l5 5-5 5" fill="none" stroke="#fff" stroke-width="2.500"/>
<path d="M290 733q0-2 2-2h4l1 2h6v3H294l-4 7z" fill="#eee"/><polygon points="293,737 306,737 303,743 290,743" fill="#eee"/>
<polygon points="383,733 389,737 383,741" fill="#fff"/>
<g fill="#fff"><rect x="16" y="763" width="3" height="3"/><rect x="21" y="763" width="11" height="3"/><rect x="25" y="769" width="7" height="3"/><rect x="21" y="775" width="11" height="3"/><polygon points="17,770 22,766 22,776"/></g>
<use href="#mag" x="349" y="762" width="16" height="16"/>
<rect x="372" y="763" width="12" height="14" fill="none" stroke="#fff" stroke-width="1.500"/><path d="M374 767h8M374 770h8M374 773h8" stroke="#fff"/>
<polygon points="15,793 21,793 21,787" fill="#000"/>
<use href="#fold" x="24" y="788" width="16" height="13" fill="#ccc"/>
<g fill="none" stroke="#bbb"><polygon points="25,807 30,811 25,815"/><polygon points="25,839 30,843 25,847"/><polygon points="25,855 30,859 25,863"/></g>
<use href="#fold" x="34" y="805" width="15" height="12" fill="#3cb000"/><use href="#fold" x="34" y="821" width="15" height="12" fill="#0a0ae6"/><use href="#fold" x="34" y="837" width="15" height="12" fill="#bdbdbd"/><use href="#fold" x="34" y="853" width="15" height="12" fill="#e85d04"/><use href="#fold" x="34" y="869" width="15" height="12" fill="#bdbdbd"/>
<polygon points="404,764 414,764 410,770 410,776 408,774 408,770" fill="#fff"/><polygon points="452,768 460,768 456,773" fill="#fff"/>
<use href="#mag" x="1499" y="762" width="16" height="16"/>
<rect x="1522" y="765" width="9" height="10" fill="none" stroke="#777" stroke-width="1.200"/><rect x="1524" y="765" width="5" height="3" fill="#777"/>
<!-- big folders -->
<g><path d="M404 800L407 797Q408 796 410 796H426Q428 796 429 800H459V834H404Z" fill="url(#fg)"/><polygon points="459,824 461,824 461,834 459,834" fill="#222"/></g>
<g transform="translate(70,0)"><path d="M404 800L407 797Q408 796 410 796H426Q428 796 429 800H459V834H404Z" fill="url(#fb)"/><polygon points="459,824 461,824 461,834 459,834" fill="#222"/></g>
<g transform="translate(140,0)"><path d="M404 800L407 797Q408 796 410 796H426Q428 796 429 800H459V834H404Z" fill="url(#fw)"/><polygon points="459,824 461,824 461,834 459,834" fill="#222"/></g>
<g transform="translate(210,0)"><path d="M404 800L407 797Q408 796 410 796H426Q428 796 429 800H459V834H404Z" fill="url(#fo)"/><polygon points="459,824 461,824 461,834 459,834" fill="#222"/></g>
<g transform="translate(280,0)"><path d="M404 800L407 797Q408 796 410 796H426Q428 796 429 800H459V834H404Z" fill="url(#fw)"/><polygon points="459,824 461,824 461,834 459,834" fill="#222"/></g>
<use href="#eye" x="1430" y="1017" width="17" height="11"/><polygon points="1524,1021 1532,1021 1528,1025" fill="#ccc"/>
</svg>

<!-- toast -->
<div class="a" style="left:1583px;top:962px;width:330px;height:62px;background:linear-gradient(#252525,#171717);border:1px solid #000"></div>
<svg class="a" style="left:1603px;top:978px" width="34" height="34"><polygon points="17,2 31,30 3,30" fill="#4a4a4a" stroke="#111" stroke-width="1.500"/><rect x="15.800" y="11" width="2.400" height="10" fill="#ddd"/><rect x="15.800" y="23" width="2.400" height="2.400" fill="#ddd"/></svg>
<div class="t" style="left:1650px;top:972px;height:22px;line-height:22px;font-size:19.8px;font-weight:bold;color:#ddd">New plugins are available</div>
<div class="a" style="left:1651px;top:998px;width:107px;height:20px;background:linear-gradient(#dadada,#b8b8b8);border:1px solid #222;color:#222;font-size:12.4px;line-height:18px;text-align:center;white-space:nowrap">Manage Plugins...</div>
<div class="a" style="left:1764px;top:998px;width:52px;height:20px;background:linear-gradient(#dadada,#b8b8b8);border:1px solid #222;color:#222;font-size:12.5px;line-height:18px;text-align:center">Dismiss</div>
</body></html>
